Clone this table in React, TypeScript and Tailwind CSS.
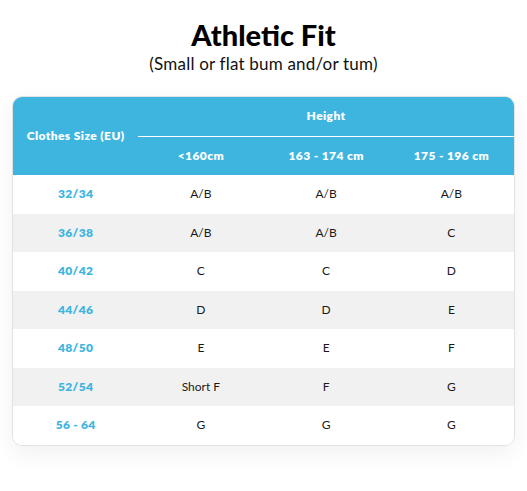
const rows: [string, string, string, string][] = [
  ["32/34", "A/B", "A/B", "A/B"],
  ["36/38", "A/B", "A/B", "C"],
  ["40/42", "C", "C", "D"],
  ["44/46", "D", "D", "E"],
  ["48/50", "E", "E", "F"],
  ["52/54", "Short F", "F", "G"],
  ["56 - 64", "G", "G", "G"],
];

export default function App() {
  return (
    <div className="min-h-screen bg-white font-['Lato','Noto_Sans',sans-serif] text-[#1a1a1a]">
      <div className="pt-[17px] text-center">
        <h1 className="text-[29px] font-black leading-[35px] text-black">Athletic Fit</h1>
        <p className="mt-[1px] text-[17px] leading-[21px] tracking-[0.2px] text-[#111]">(Small or flat bum and/or tum)</p>
      </div>

      <div className="mx-[12px] mt-[22px] overflow-hidden rounded-[10px] border border-[#e2e2e2] shadow-[0_8px_24px_rgba(0,0,0,0.06)]">
        <table className="w-full table-fixed border-collapse">
          <thead className="bg-[#3db5df] text-white">
            <tr className="h-[39px]">
              <th rowSpan={2} className="text-[12px] font-extrabold tracking-[0.4px]">Clothes Size (EU)</th>
              <th colSpan={3} className="border-b border-white text-[12px] font-extrabold tracking-[0.4px]">Height</th>
            </tr>
            <tr className="h-[39px]">
              <th className="text-[12px] font-extrabold tracking-[0.4px]">&lt;160cm</th>
              <th className="text-[12px] font-extrabold tracking-[0.4px]">163 - 174 cm</th>
              <th className="text-[12px] font-extrabold tracking-[0.4px]">175 - 196 cm</th>
            </tr>
          </thead>
          <tbody>
            {rows.map((r, i) => (
              <tr key={r[0]} className={i % 2 === 1 ? "h-[38.5px] bg-[#f1f1f1]" : "h-[38.5px] bg-white"}>
                <td className="text-center text-[12px] font-extrabold tracking-[0.3px] text-[#3db5df]">{r[0]}</td>
                <td className="text-center text-[12px]">{r[1]}</td>
                <td className="text-center text-[12px]">{r[2]}</td>
                <td className="text-center text-[12px]">{r[3]}</td>
              </tr>
            ))}
          </tbody>
        </table>
      </div>
    </div>
  );
}
